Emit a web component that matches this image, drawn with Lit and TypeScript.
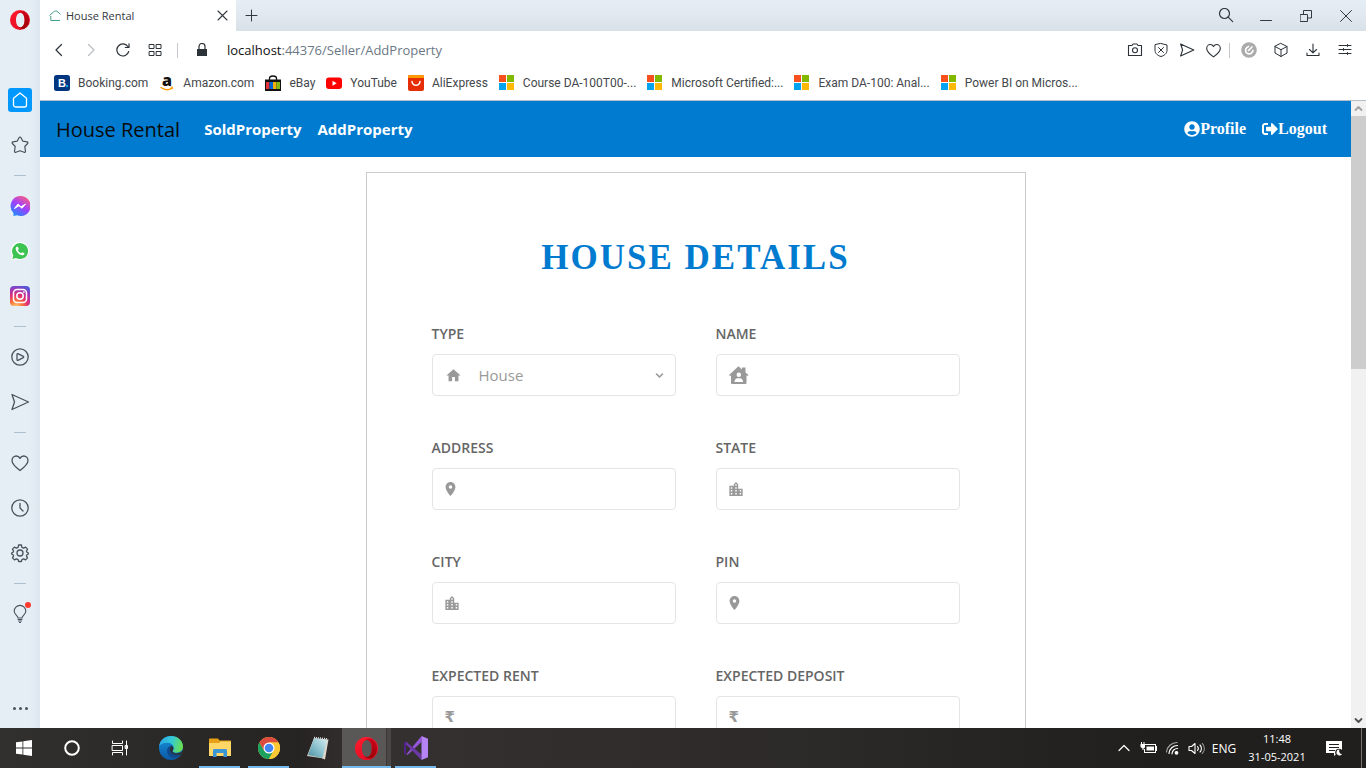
import { LitElement, html, svg, css, TemplateResult } from "lit";
import { customElement, state } from "lit/decorators.js";
import { classMap } from "lit/directives/class-map.js";

const line = (size: number, box: number, body: TemplateResult, width = 1) => html`
  <svg width=${size} height=${size} viewBox="0 0 ${box} ${box}" fill="none" stroke="currentColor"
    stroke-width=${width} stroke-linecap="round" stroke-linejoin="round" aria-hidden="true">${body}</svg>`;

const solid = (w: number, h: number, viewBox: string, body: TemplateResult) => html`
  <svg width=${w} height=${h} viewBox=${viewBox} fill="currentColor" aria-hidden="true">${body}</svg>`;

const operaMark = (size: number, id: string) => html`
  <svg width=${size} height=${size} viewBox="0 0 24 24" aria-hidden="true">
    <defs>
      <linearGradient id=${id + "a"} x1="0" y1="0" x2="0" y2="1"><stop offset="0" stop-color="#ff1b2d" /><stop offset="1" stop-color="#e60f26" /></linearGradient>
      <linearGradient id=${id + "b"} x1="0" y1="0" x2="0" y2="1"><stop offset="0" stop-color="#c4001a" /><stop offset="1" stop-color="#8c0000" /></linearGradient>
    </defs>
    <path fill-rule="evenodd" fill="url(#${id + "a"})" d="M12 0a12 12 0 1 0 0 24 12 12 0 0 0 0-24zM12.500 3.200c3 0 5 3.800 5 8.800s-2 8.800-5 8.800-5.300-3.800-5.300-8.800 2.300-8.800 5.300-8.800z" />
    <path fill="url(#${id + "b"})" opacity=".85" d="M8.800 4.700C10.500 2.400 13.800 1 17 1.600A12 12 0 0 1 17 22.400c-3.200.6-6.500-.8-8.200-3.100 1.100 1 2.400 1.500 3.700 1.500 3 0 5-3.800 5-8.800s-2-8.800-5-8.800c-1.300 0-2.600.5-3.700 1.500z" />
  </svg>`;

const heartPath = svg`<path d="M10 17.500C6 14.500 2 11.500 2 7.500 2 5 4 3 6.300 3 8 3 9.300 4 10 5.400 10.700 4 12 3 13.700 3 16 3 18 5 18 7.500c0 4-4 7-8 10z" />`;
const sendPath = svg`<path d="M2 2.500 18.500 10 2 17.500 4.500 10z" />`;

const microsoft = html`<svg width="16" height="16" viewBox="0 0 16 16" aria-hidden="true">
  <path fill="#f8501c" d="M0 0h7v7H0z" /><path fill="#80b900" d="M8 0h7v7H8z" />
  <path fill="#02a3ee" d="M0 8h7v7H0z" /><path fill="#ffb902" d="M8 8h7v7H8z" /></svg>`;

const bookmarks: { label: string; icon: TemplateResult }[] = [
  { label: "Booking.com", icon: html`<svg width="16" height="16" viewBox="0 0 16 16" aria-hidden="true"><rect width="16" height="16" rx="2.500" fill="#003580" /><text x="4" y="12" font-family="Liberation Sans" font-weight="700" font-size="11" fill="#fff">B</text><circle cx="13" cy="11" r="1.200" fill="#0ba6ee" /></svg>` },
  { label: "Amazon.com", icon: html`<svg class="spill" width="16" height="16" viewBox="0 0 16 16" aria-hidden="true"><text x="3" y="11" font-family="Open Sans" font-weight="800" font-size="16" fill="#111">a</text><path d="M2 12.500c3.500 2.600 8 2.600 11 .6" fill="none" stroke="#f90" stroke-width="1.300" stroke-linecap="round" /><path d="M11.500 12l2.200.2-.6 2" fill="none" stroke="#f90" /></svg>` },
  { label: "eBay", icon: html`<svg width="16" height="16" viewBox="0 0 16 16" aria-hidden="true"><path d="M4.500 5V3.500a3.500 2.500 0 0 1 7 0V5" fill="none" stroke="#111" stroke-width="1.300" /><path d="M0 4.500h16V16H0z" fill="#111" /><path d="M1 7h3.500v7H1z" fill="#e53238" /><path d="M4.500 7H8v7H4.500z" fill="#0064d2" /><path d="M8 7h3.500v7H8z" fill="#f5af02" /><path d="M11.500 7H15v7h-3.500z" fill="#86b817" /></svg>` },
  { label: "YouTube", icon: html`<svg width="16" height="16" viewBox="0 0 16 16" aria-hidden="true"><rect y="2.500" width="16" height="11.500" rx="3" fill="#f00" /><path d="M6.500 5.800v5l4.200-2.500z" fill="#fff" /></svg>` },
  { label: "AliExpress", icon: html`<svg width="16" height="16" viewBox="0 0 16 16" aria-hidden="true"><rect width="16" height="16" rx="2" fill="#e62e04" /><path d="M0 3V2a2 2 0 0 1 2-2h12a2 2 0 0 1 2 2v1z" fill="#ff9900" /><path d="M4 6.500c.6 5 7.400 5 8 0" fill="none" stroke="#fff" stroke-width="1.500" stroke-linecap="round" /></svg>` },
  { label: "Course DA-100T00-...", icon: microsoft },
  { label: "Microsoft Certified:...", icon: microsoft },
  { label: "Exam DA-100: Anal...", icon: microsoft },
  { label: "Power BI on Micros...", icon: microsoft },
];

const sidebar: ({ label: string; icon: TemplateResult; active?: boolean } | null)[] = [
  { label: "Speed Dial", active: true, icon: line(18, 18, svg`<path d="M2.500 7.200 9 2l6.500 5.200v6.800a2 2 0 0 1-2 2h-9a2 2 0 0 1-2-2z" />`, 1.3) },
  { label: "Bookmarks", icon: line(20, 20, svg`<path d="M10 2c.5 0 .8.300 1 .7l1.700 3.400 4.300.8c.9.200 1.200 1 .6 1.600L14.800 11.500l.7 4.800c.1.800-.6 1.300-1.400 1L10 15.800l-4.100 1.500c-.8.300-1.500-.2-1.400-1l.7-4.800L2.400 8.500c-.6-.6-.3-1.400.6-1.600l4.300-.8L9 2.700c.2-.4.500-.7 1-.7z" />`, 1.2) },
  null,
  { label: "Messenger", icon: html`<svg width="20" height="20" viewBox="0 0 20 20" aria-hidden="true"><defs><linearGradient id="ms" x1=".2" y1="1" x2=".8" y2="0"><stop offset="0" stop-color="#1a8cff" /><stop offset=".5" stop-color="#a040ff" /><stop offset="1" stop-color="#ff5f7a" /></linearGradient></defs><path fill="url(#ms)" d="M10 0a10 10 0 1 1-3 19.300L3.500 20v-3A10 10 0 0 1 10 0z" /><path d="M4.500 12.500 8 8l3 2.800L15.500 8 12 12.300 9 9.700z" fill="#fff" stroke="#fff" stroke-linejoin="round" /></svg>` },
  { label: "WhatsApp", icon: html`<svg width="20" height="20" viewBox="0 0 20 20" aria-hidden="true"><path d="M1 19.300 2.200 14.600A9 9 0 1 1 6 18z" fill="#fff" /><path d="M2.400 17.900l.9-3.500A8 8 0 1 1 6 17z" fill="#3dc352" /><path d="M7 5.700c-.8.2-1.400 1-1.300 2 .3 3 3.500 6.200 6.600 6.600 1.200.1 2.200-.8 2.200-2l-2.200-1.100-1.100 1.100C9.800 11.800 8.300 10.300 7.800 9l1-1.100L7.900 5.700z" fill="#fff" /></svg>` },
  { label: "Instagram", icon: html`<svg width="20" height="20" viewBox="0 0 20 20" aria-hidden="true"><defs><radialGradient id="ig" cx=".3" cy="1.050" r="1.100"><stop offset="0" stop-color="#fed373" /><stop offset=".3" stop-color="#f9713a" /><stop offset=".55" stop-color="#e02f74" /><stop offset=".8" stop-color="#a535b5" /><stop offset="1" stop-color="#5558d8" /></radialGradient></defs><rect width="20" height="20" rx="4" fill="url(#ig)" /><rect x="3.500" y="3.500" width="13" height="13" rx="3.500" fill="none" stroke="#fff" stroke-width="1.500" /><circle cx="10" cy="10" r="3.200" fill="none" stroke="#fff" stroke-width="1.500" /><circle cx="13.900" cy="6.100" r=".9" fill="#fff" /></svg>` },
  null,
  { label: "Player", icon: line(20, 20, svg`<circle cx="10" cy="10" r="8.200" /><path d="M7 7.300c0-.6.400-.8.900-.6l5.400 2.700c.5.300.5.900 0 1.200l-5.400 2.700c-.5.200-.9 0-.9-.6z" />`, 1.3) },
  { label: "My Flow", icon: line(20, 20, sendPath as TemplateResult, 1.3) },
  null,
  { label: "Pinboards", icon: line(20, 20, heartPath as TemplateResult, 1.3) },
  { label: "History", icon: line(20, 20, svg`<circle cx="10" cy="10" r="8.200" /><path d="M10 5.500V10l3 3" />`, 1.3) },
  { label: "Settings", icon: line(20, 20, svg`<circle cx="10" cy="10" r="3" /><path d="M8.600 2h2.800l.5 2.300 1.700.8 2-1 1.900 2-1.100 2 .5 1.100 1.500.8v1l-1.500.8-.5 1.100 1.100 2-1.900 2-2-1-1.700.8-.5 1.800H8.600l-.5-1.800-1.700-.8-2 1-1.900-2 1.100-2-.5-1.100L1.600 11v-1l1.500-.8.500-1.100-1.100-2 1.900-2 2 1 1.700-.8z" />`, 1.3) },
  null,
  { label: "Tips", icon: html`<span class="tip">${line(20, 20, svg`<path d="M8 14c0-2.200-3.800-3.300-3.800-6.800a5.800 5.800 0 0 1 11.600 0C15.800 10.700 12 11.800 12 14zM8 15.500h4M8.500 17h3M9.500 18.500h1" />`, 1.1)}<i></i></span>` },
];

const glyph = {
  home: solid(17, 17, "0 0 24 24", svg`<path d="M10 20v-6h4v6h5v-8h3L12 3 2 12h3v8z" />` as TemplateResult),
  owner: solid(20, 18, "0 0 20 18", svg`<path fill-rule="evenodd" d="M0 9 9.500.3 13 3.400V1.500h3.500v5L19.500 9l-1 1-1-.8V17a1 1 0 0 1-1 1H3a1 1 0 0 1-1-1V9.200l-1 .8zM9.800 6.500a2.200 2.200 0 1 0 0 4.500 2.200 2.200 0 0 0 0-4.500zM5.500 16h8.600c0-2.500-1.600-3.800-3-3.800H8.500c-1.500 0-3 1.300-3 3.800z" />` as TemplateResult),
  pin: solid(11, 14, "5 2 14 20", svg`<path d="M12 2C8.100 2 5 5.100 5 9c0 5.300 7 13 7 13s7-7.700 7-13c0-3.900-3.100-7-7-7zm0 9.500a2.500 2.500 0 1 1 0-5 2.500 2.500 0 0 1 0 5z" />` as TemplateResult),
  city: solid(14, 14, "3 2 18 19", svg`<path d="M15 11V5l-3-3-3 3v2H3v14h18V11zm-8 8H5v-2h2zm0-4H5v-2h2zm0-4H5V9h2zm6 8h-2v-2h2zm0-4h-2v-2h2zm0-4h-2V9h2zm0-4h-2V5h2zm6 12h-2v-2h2zm0-4h-2v-2h2z" />` as TemplateResult),
  rupee: html`<span class="rupee">₹</span>`,
};

const fields = [
  { id: "type", label: "TYPE", icon: glyph.home, options: ["House", "Apartment", "Villa"] },
  { id: "name", label: "NAME", icon: glyph.owner },
  { id: "address", label: "ADDRESS", icon: glyph.pin },
  { id: "state", label: "STATE", icon: glyph.city },
  { id: "city", label: "CITY", icon: glyph.city },
  { id: "pin", label: "PIN", icon: glyph.pin },
  { id: "rent", label: "EXPECTED RENT", icon: glyph.rupee },
  { id: "deposit", label: "EXPECTED DEPOSIT", icon: glyph.rupee },
];

const windowsMark = solid(16, 16, "0 0 16 16", svg`<path d="M0 2.300 6.500 1.400v6.200H0zM7.300 1.300 16 0v7.600H7.300zM0 8.400h6.500v6.200L0 13.700zM7.300 8.400H16V16l-8.700-1.300z" />` as TemplateResult);
const cortana = line(18, 18, svg`<circle cx="9" cy="9" r="6.800" />` as TemplateResult, 2);
const taskView = line(18, 18, svg`<path d="M1.500 2V4.500h10V2M1.500 16v-2.500h10V16M1.500 6.500h10v5h-10zM15.500 2v14" /><path d="M14.500 6.500h2v3h-2z" fill="currentColor" />` as TemplateResult, 1);

const edge = html`<svg width="24" height="24" viewBox="0 0 24 24" aria-hidden="true"><defs><linearGradient id="eg" x1="0" y1=".3" x2="1" y2=".5"><stop offset="0" stop-color="#2aa7e8" /><stop offset=".5" stop-color="#34c9d5" /><stop offset="1" stop-color="#6be04c" /></linearGradient><linearGradient id="eb" x1="0" y1="0" x2="0" y2="1"><stop offset="0" stop-color="#1690dd" /><stop offset="1" stop-color="#0c59a4" /></linearGradient></defs>
  <circle cx="12" cy="12" r="12" fill="url(#eb)" /><path d="M0 10.500C1 4 6 0 12 0c7 0 12 5 12 10.500 0 4-3 6.200-6.500 6.200-3.200 0-4.300-1.200-3.600-2.300.7-1.100 1-1.600.8-3C14.300 9 12 6.800 8.500 6.800 4.500 6.800 1.200 8.500 0 10.500z" fill="url(#eg)" />
  <path d="M8 15c0-3 1.700-5 4.500-5.500 1.500.7 2.400 2 1.800 3.800-.3.800-1.400 1.500-.6 2.600 1.700 2.100 6 1.900 8.300.4.500-.3 1 .1.700.6-1.200 2.400-3.500 4.300-6.300 5C11.500 22.500 8 19 8 15z" fill="#114a8b" />
  <path d="M12.300 10.300c1.600.5 2.400 1.800 1.800 3.300-.4.900-1.100 1.400-.4 2.300 1.700 2.100 6 1.900 8.300.4l2-2.300 0 3-1.500 1c-5 2-11 .5-11.300-4.500-.1-1.300.3-2.500 1.100-3.200z" fill="#312f2e" /></svg>`;
const explorer = html`<svg width="22" height="20" viewBox="0 0 22 20" aria-hidden="true"><path d="M0 1.500C0 .7.500.5 1 .5h8l1.500 2H21c.6 0 1 .4 1 1V8H0z" fill="#e6a117" /><path d="M0 5h10l1.500-1.500H22V18H0z" fill="#ffd767" /><path d="M4 19v-6.500c0-1 .6-1.500 1.500-1.500h11c.9 0 1.500.5 1.500 1.500V19h-3.500v-4h-7v4z" fill="#3a97d3" /></svg>`;
const chrome = html`<svg width="22" height="22" viewBox="0 0 48 48" aria-hidden="true"><circle cx="24" cy="24" r="24" fill="#fcc934" /><path d="M3.200 12A24 24 0 0 0 24 48l10.400-18L24 34 13.600 30z" fill="#1da15f" /><path d="M24 12h20.800A24 24 0 0 0 3.200 12l10.400 18L24 24z" fill="#dd4b3e" /><path d="M24 12h20.800A24 24 0 0 1 24 48l11-20z" fill="#fcc934" /><circle cx="24" cy="24" r="12" fill="#fff" /><circle cx="24" cy="24" r="9.500" fill="#4285f4" /></svg>`;
const notepad = html`<svg width="22" height="24" viewBox="0 0 22 24" aria-hidden="true"><defs><linearGradient id="np" x1="1" y1="0" x2="0" y2="1"><stop offset="0" stop-color="#d5eef2" /><stop offset=".6" stop-color="#7db8c6" /><stop offset="1" stop-color="#4d8c9c" /></linearGradient></defs><path d="m7 2 14.500 1.500L18 23.500l-4-1.500L0 20z" fill="#ddd8cc" /><path d="M7 2.500 20 4l-4.500 18L1 19z" fill="url(#np)" /><path d="m7 1.500 13 1.300" stroke="#ddd" stroke-width="1.500" stroke-dasharray="1 1" /></svg>`;
const studio = html`<svg width="24" height="24" viewBox="0 0 24 24" aria-hidden="true"><path d="M0 6.500 2 5.300v13.500L0 17.500z" fill="#52218a" /><path d="M2 18.800 17.500 0v6L4 18.500z" fill="#9455d8" /><path d="M2 5.500l15.500 13V24L2 8.500z" fill="#6b38a5" /><path d="M17.500 0 24 2.800v18.500L17.500 24z" fill="#b583f5" /></svg>`;

@customElement("app-root")
export class AppRoot extends LitElement {
  @state() private values: Record<string, string> = {};

  static styles = css`
    :host {
      --ui: "Open Sans", "Noto Sans", sans-serif;
      --site: "Open Sans", sans-serif;
      --blue: #007bd0;
      display: flex;
      flex-direction: column;
      height: 100vh;
      overflow: hidden;
      background: #fff;
      font-family: var(--ui);
    }
    * { box-sizing: border-box; }
    svg { display: block; flex: none; }
    .spill { overflow: visible; }
    button, input, select { font: inherit; color: inherit; border: 0; padding: 0; margin: 0; background: none; }
    a { color: inherit; text-decoration: none; }
    button { display: flex; align-items: center; justify-content: center; }

    .shell { flex: 1; min-height: 0; display: flex; }

    .rail {
      width: 40px;
      flex: none;
      display: flex;
      flex-direction: column;
      align-items: center;
      background: linear-gradient(90deg, #e5edf5 75%, #dde6ee);
      color: #49535d;
    }
    .rail .brand { height: 40px; margin-bottom: 37px; }
    .rail .slot { width: 40px; height: 45px; }
    .rail .tile { display: flex; align-items: center; justify-content: center; width: 24px; height: 24px; border-radius: 3px; }
    .rail .tile.active { background: #0098ff; color: #fff; }
    .rail hr { width: 12px; height: 1px; margin: 8px 0 7px; border: 0; background: #adc0cd; }
    .rail .more { margin-top: auto; height: 40px; gap: 3px; }
    .rail .more i { width: 3px; height: 3px; border-radius: 50%; background: #49535d; }
    .tip { position: relative; }
    .tip i { position: absolute; top: -2px; right: -1px; width: 6px; height: 6px; border-radius: 50%; background: #ff3b30; }

    .window { flex: 1; min-width: 0; display: flex; flex-direction: column; }
    .tabs { height: 31px; display: flex; background: linear-gradient(#e5edf5, #e1e8f0 50%, #d8e0e8); color: #33393f; }
    .tab { width: 196px; display: flex; align-items: center; gap: 5px; padding: 0 8px 0 9px; background: #fff; font-size: 11px; }
    .tab span { flex: 1; }
    .plus { width: 31px; }
    .controls { margin-left: auto; display: flex; }
    .controls button { width: 40px; }

    .address { height: 38px; display: flex; align-items: center; color: #2b3238; }
    .address button { width: 32px; height: 32px; }
    .address .off { color: #b8bcc0; }
    .address nav { display: flex; padding: 0 6px 0 3px; }
    .bar { width: 1px; height: 15px; background: #c4c8cc; }
    .lock { margin: 0 20px 0 19px; }
    .url { flex: 1; font-size: 13px; color: #6b7885; }
    .url b { font-weight: 400; color: #111; }
    .tools { display: flex; align-items: center; padding-right: 5px; }
    .tools button { width: 26px; }
    .tools .bar { margin: 0 3px; }
    .tools .wide button { width: 32px; }
    .wide { display: flex; }

    .marks { height: 32px; display: flex; align-items: center; gap: 11px; padding: 0 14px 4px; border-bottom: 1px solid #b4bfc9; color: #44484c; font-family: Roboto, sans-serif; font-size: 12px; white-space: nowrap; }
    .marks a { display: flex; align-items: center; gap: 8px; }

    .view { flex: 1; min-height: 0; display: flex; }
    .page { flex: 1; min-width: 0; overflow: hidden; }
    .scroll { width: 15px; display: flex; flex-direction: column; background: #f1f1f1; color: #a3a3a3; }
    .scroll button { height: 15px; }
    .scroll .down { margin-top: auto; color: #505050; }
    .thumb { height: 40.4%; background: #cdcdcd; }

    .site { height: 56px; display: flex; align-items: center; gap: 16px; padding: 0 24px 0 16px; background: var(--blue); color: #fff; font-family: var(--site); font-weight: 700; font-size: 15px; }
    .site .logo { margin-right: 8px; font-size: 20px; font-weight: 400; color: #0a0a0a; }
    .site .push { margin-left: auto; }
    .site .account { display: flex; align-items: center; font-family: "Liberation Serif", serif; font-size: 16px; }

    .card { max-width: 660px; margin: 15px auto 30px; padding: 64px 65px; border: 1px solid #ccc; }
    h1 { margin: 0 0 45px; text-align: center; line-height: 42px; font-family: "Liberation Serif", serif; font-size: 35px; font-weight: 700; letter-spacing: 2px; color: var(--blue); }
    .grid { display: grid; grid-template-columns: 1fr 1fr; gap: 42px 40px; font-family: var(--site); }
    .field { display: flex; flex-direction: column; gap: 10px; min-width: 0; }
    .field label { line-height: 20px; font-size: 14px; font-weight: 600; color: #666; }
    .box { height: 42px; display: flex; align-items: center; gap: 17px; padding: 0 11px 0 12px; border: 1px solid #e5e5e5; border-radius: 4px; color: #999; font-size: 15px; }
    .box input, .box select { flex: 1; min-width: 0; height: 40px; outline: 0; appearance: none; }
    .box:focus-within { border-color: var(--blue); }
    .rupee { font: 700 15px "DejaVu Sans", sans-serif; }

    .taskbar { height: 40px; flex: none; display: flex; background: linear-gradient(90deg, #32302f, #262423 22%, #343130 26%, #2c2a28 60%, #201f1d 85%); color: #fff; }
    .taskbar .app { width: 49px; height: 40px; border-bottom: 2px solid transparent; padding-top: 2px; }
    .taskbar .sys { width: 48px; height: 40px; }
    .taskbar .first { margin-left: 2px; }
    .taskbar .running { border-bottom-color: #76b9ed; width: 41px; margin: 0 4px; }
    .taskbar .current { width: 49px; margin: 0; background: linear-gradient(90deg, #5a5857 44px, #2c2a28 44px, #4a4846 45px); }
    .tray { margin-left: auto; display: flex; align-items: center; font-size: 12px; }
    .tray button { width: 24px; height: 40px; }
    .lang { width: 32px; text-align: center; }
    .clock { width: 74px; line-height: 18px; text-align: center; font-size: 11px; }
    .tray .note { width: 40px; }
    .peek { width: 5px; height: 40px; margin-left: 7px; border-left: 1px solid #77746f; }
  `;

  private setValue(id: string, e: Event) {
    this.values = { ...this.values, [id]: (e.target as HTMLInputElement).value };
  }

  private renderRail() {
    return html`<aside class="rail">
      <button class="brand" aria-label="Opera menu">${operaMark(20, "o1")}</button>
      ${sidebar.map((s) => s === null ? html`<hr />` : html`
        <button class="slot" aria-label=${s.label}><span class=${classMap({ tile: true, active: !!s.active })}>${s.icon}</span></button>`)}
      <button class="more" aria-label="Sidebar setup"><i></i><i></i><i></i></button>
    </aside>`;
  }

  private renderChrome() {
    return html`
      <header class="tabs">
        <div class="tab">
          <svg width="12" height="12" viewBox="0 0 12 12" fill="none" stroke="#469c8c" aria-hidden="true"><path d="M.5 5.500 4.500 2c1.500-1.300 3-1.300 4.500 0L11.500 4.500M1.800 6v4.500H11" /></svg>
          <span>House Rental</span>
          <button aria-label="Close tab">${line(11, 11, svg`<path d="m1 1 9 9M10 1l-9 9" />` as TemplateResult, 1.1)}</button>
        </div>
        <button class="plus" aria-label="New tab">${line(13, 13, svg`<path d="M6.500 1v11M1 6.500h11" />` as TemplateResult, 1)}</button>
        <div class="controls">
          <button aria-label="Search tabs">${line(16, 16, svg`<circle cx="6.500" cy="5.500" r="5" /><path d="m10.200 9.200 4.500 4.500" />` as TemplateResult, 1.2)}</button>
          <button aria-label="Minimize">${line(12, 12, svg`<path d="M.5 10.500h11" />` as TemplateResult, 1)}</button>
          <button aria-label="Restore">${line(12, 12, svg`<path d="M.5 4.500h7v7h-7zM3.500 4.500v-4h8v7.500h-4" />` as TemplateResult, 1)}</button>
          <button aria-label="Close">${line(12, 12, svg`<path d="m.5.5 11 11M11.500.5l-11 11" />` as TemplateResult, 1)}</button>
        </div>
      </header>
      <div class="address">
        <nav>
          <button aria-label="Back">${line(14, 14, svg`<path d="M9.500 1.500 4 7l5.500 5.500" />` as TemplateResult, 1.2)}</button>
          <button class="off" aria-label="Forward">${line(14, 14, svg`<path d="M4.500 1.500 10 7l-5.500 5.500" />` as TemplateResult, 1.1)}</button>
          <button aria-label="Reload">${line(14, 14, svg`<path d="M12.700 8.500A6 6 0 1 1 11.800 3.500M13 .8v3.700H9.300" />` as TemplateResult, 1.2)}</button>
          <button aria-label="Speed Dial">${line(14, 14, svg`<path d="M1.500 1.500h4.500v4h-4.500zM8.500 1.500H13v4H8.500zM1.500 8.500h4.500v4h-4.500zM8.500 8.500H13v4H8.500z" />` as TemplateResult, 1)}</button>
        </nav>
        <span class="bar"></span>
        <span class="lock">${solid(10, 14, "0 0 10 14", svg`<path d="M0 6h10v7H0z" /><path d="M2 6V3.500a3 3 0 0 1 6 0V6" fill="none" stroke="currentColor" stroke-width="1.200" />` as TemplateResult)}</span>
        <span class="url"><b>localhost</b>:44376/Seller/AddProperty</span>
        <div class="tools">
          <button aria-label="Snapshot">${line(16, 16, svg`<path d="M1.500 3.500H5L6 2h4l1 1.500h3.500v10h-13z" /><circle cx="8" cy="8.200" r="2.500" />` as TemplateResult, 1.1)}</button>
          <button aria-label="Ad blocker">${line(16, 16, svg`<path d="M8 1.500 14 3v5.500c0 3-3 5.300-6 6-3-.7-6-3-6-6V3zM5.500 5.500l5 5M10.500 5.500l-5 5" />` as TemplateResult, 1)}</button>
          <button aria-label="Send to Flow">${line(16, 20, sendPath as TemplateResult, 1.4)}</button>
          <button aria-label="Add to bookmarks">${line(17, 20, heartPath as TemplateResult, 1.3)}</button>
          <span class="bar"></span>
          <span class="wide">
            <button aria-label="Extension"><svg width="16" height="16" viewBox="0 0 16 16" aria-hidden="true"><circle cx="8" cy="8" r="7.800" fill="#ababab" /><path d="M7.500 4.500C4.800 5.500 3.800 8.500 5.200 10.500c1.500 2 4.600 1.600 6-.3l.8-1.700M7.500 8.500 11 5" fill="none" stroke="#fff" stroke-width="1.700" stroke-linecap="round" /></svg></button>
            <button aria-label="Wallet">${line(16, 16, svg`<path d="m8 1.500 6 3v6.500l-6 3.500L2 11V4.500zM2 4.500l6 3.200 6-3.200M8 7.700v6.800" />` as TemplateResult, 1)}</button>
            <button aria-label="Downloads">${line(16, 16, svg`<path d="M8 2v8.500M4.500 7.500 8 10.800l3.500-3.300M2 11v2.500h12V11" />` as TemplateResult, 1.1)}</button>
            <button aria-label="Easy setup">${line(14, 14, svg`<path d="M1 2.500h12M1 6.500h12M1 10.500h12M9.500 1.500v2M5.500 5.500v2M9.500 9.500v2" />` as TemplateResult, 1)}</button>
          </span>
        </div>
      </div>
      <nav class="marks">${bookmarks.map((b) => html`<a href="#">${b.icon}<span>${b.label}</span></a>`)}</nav>`;
  }

  private renderField(f: (typeof fields)[number]) {
    return html`<div class="field">
      <label for=${f.id}>${f.label}</label>
      <div class="box">
        ${f.icon}
        ${f.options
          ? html`<select id=${f.id} @change=${(e: Event) => this.setValue(f.id, e)}>${f.options.map((o) => html`<option>${o}</option>`)}</select>
              ${line(9, 9, svg`<path d="M1.500 3 4.500 6l3-3" />` as TemplateResult, 1.6)}`
          : html`<input id=${f.id} type="text" .value=${this.values[f.id] ?? ""} @input=${(e: Event) => this.setValue(f.id, e)} />`}
      </div>
    </div>`;
  }

  private renderTaskbar() {
    return html`<footer class="taskbar">
      <button class="sys" aria-label="Start">${windowsMark}</button>
      <button class="sys" aria-label="Cortana">${cortana}</button>
      <button class="sys" aria-label="Task view">${taskView}</button>
      <button class="app first" aria-label="Edge">${edge}</button>
      <button class="app running" aria-label="File Explorer">${explorer}</button>
      <button class="app running" aria-label="Chrome">${chrome}</button>
      <button class="app" aria-label="Notepad">${notepad}</button>
      <button class="app running current" aria-label="Opera">${operaMark(23, "o2")}</button>
      <button class="app running" aria-label="Visual Studio">${studio}</button>
      <div class="tray">
        <button aria-label="Hidden icons">${line(14, 14, svg`<path d="m2 9.500 5-5 5 5" />` as TemplateResult, 1.2)}</button>
        <button aria-label="Battery">${solid(17, 12, "0 0 17 12", svg`<path fill-rule="evenodd" d="M5 2h11v2h1v5h-1v2H4V7h1v3h10V3H5z" /><path d="M6.500 4.500h7.500v4H6.500z" /><path d="M1 0h1v2h1.500V0h1v2H5v3.500L3.500 6.500V8h-1V6.500L.5 5V2H1z" />` as TemplateResult)}</button>
        <button aria-label="Network">${line(14, 14, svg`<path d="M1.500 11A10.500 10.500 0 0 1 12 1.500" opacity=".6" /><path d="M4 12.500A8.500 8.500 0 0 1 12.500 4.500M7 12.800A5.500 5.500 0 0 1 12.500 7.500" /><circle cx="11.500" cy="11.800" r="1.300" fill="currentColor" />` as TemplateResult, 1.2)}</button>
        <button aria-label="Volume">${line(17, 17, svg`<path d="M1 6.500h2.500L7 3.500v10l-3.500-3H1z" /><path d="M9.500 6.500a3 3 0 0 1 0 4M12 5a5 5 0 0 1 0 7" /><path d="M14.300 3.500a7 7 0 0 1 0 10" opacity=".5" />` as TemplateResult, 1.1)}</button>
        <span class="lang">ENG</span>
        <time class="clock" datetime="2021-05-31T11:48">11:48<br />31-05-2021</time>
        <button class="note" aria-label="Notifications">${solid(17, 17, "0 0 17 17", svg`<path d="M0 1h16v12h-4l-4 3v-3H0z" /><path d="M3 4.500h10M3 7.500h10M3 10.500h6" stroke="#201f1d" stroke-width="1.200" /><circle cx="13" cy="12.500" r="3.800" fill="#201f1d" /><path d="M13.500 9.500a3 3 0 1 0 2.500 4.500 3 3 0 0 1-2.500-4.500z" />` as TemplateResult)}</button>
        <span class="peek"></span>
      </div>
    </footer>`;
  }

  render() {
    return html`
      <div class="shell">
        ${this.renderRail()}
        <div class="window">
          ${this.renderChrome()}
          <div class="view">
            <main class="page">
              <nav class="site">
                <a class="logo" href="#">House Rental</a>
                <a href="#">SoldProperty</a>
                <a href="#">AddProperty</a>
                <a class="account push" href="#">${solid(16, 16, "0 0 496 512", svg`<path d="M248 8C111 8 0 119 0 256s111 248 248 248 248-111 248-248S385 8 248 8zm0 96c48.600 0 88 39.400 88 88s-39.400 88-88 88-88-39.400-88-88 39.400-88 88-88zm0 344c-58.700 0-111.300-26.600-146.500-68.200 18.800-35.400 55.600-59.800 98.500-59.800 2.400 0 4.800.4 7.100 1.100 13 4.200 26.600 6.900 40.900 6.900 14.300 0 28-2.700 40.900-6.900 2.300-.7 4.700-1.100 7.100-1.100 42.900 0 79.700 24.400 98.500 59.800C359.300 421.400 306.700 448 248 448z" />` as TemplateResult)}Profile</a>
                <a class="account" href="#">${solid(16, 16, "0 0 512 512", svg`<path d="M497 273L329 441c-15 15-41 4.500-41-17v-96H152c-13.300 0-24-10.700-24-24v-96c0-13.300 10.700-24 24-24h136V88c0-21.400 25.900-32 41-17l168 168c9.300 9.400 9.300 24.600 0 34zM192 436v-40c0-6.600-5.400-12-12-12H96c-17.700 0-32-14.300-32-32V160c0-17.700 14.300-32 32-32h84c6.600 0 12-5.400 12-12V76c0-6.600-5.400-12-12-12H96c-53 0-96 43-96 96v192c0 53 43 96 96 96h84c6.600 0 12-5.400 12-12z" />` as TemplateResult)}Logout</a>
              </nav>
              <form class="card">
                <h1>HOUSE DETAILS</h1>
                <div class="grid">${fields.map((f) => this.renderField(f))}</div>
              </form>
            </main>
            <div class="scroll">
              <button aria-label="Scroll up">${line(9, 9, svg`<path d="m1.500 6 3-3 3 3" />` as TemplateResult, 1.8)}</button>
              <div class="thumb"></div>
              <button class="down" aria-label="Scroll down">${line(9, 9, svg`<path d="m1.500 3 3 3 3-3" />` as TemplateResult, 1.8)}</button>
            </div>
          </div>
        </div>
      </div>
      ${this.renderTaskbar()}`;
  }
}
